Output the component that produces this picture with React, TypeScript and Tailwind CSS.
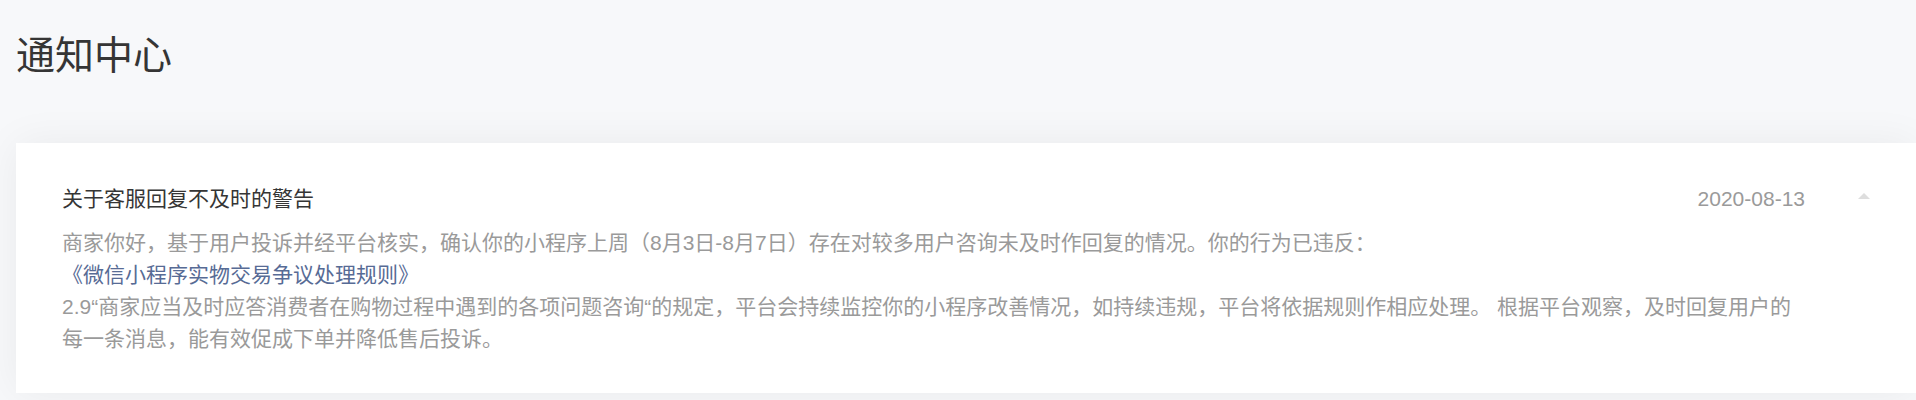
export default function App() {
  const font = {
    fontFamily: '"Liberation Sans", "Noto Sans CJK SC", sans-serif',
  };

  return (
    <div className="min-h-screen bg-[#f7f8fa] pl-4" style={font}>
      <h1 className="pt-[27px] pb-[57px] text-[39px] leading-[1.5] font-normal text-[#353535]">
        通知中心
      </h1>

      <div className="bg-white shadow-[0_0_40px_rgba(0,0,0,0.06)] px-[46px] pt-[40px] pb-[38px]">
        <div className="flex items-center">
          <div className="flex-1 text-[21px] leading-[32px] text-[#353535]">
            关于客服回复不及时的警告
          </div>
          <div className="text-[21px] leading-[32px] text-[#9a9a9a]">2020-08-13</div>
          <div className="ml-[53px] mb-[6px] h-0 w-0 border-x-[6px] border-b-[6px] border-x-transparent border-b-[#dedede]" />
        </div>
        <div className="mt-[12px] pr-[65px] text-[21px] leading-[32px] text-[#9a9a9a]">
          <p>
            商家你好，基于用户投诉并经平台核实，确认你的小程序上周（8月3日-8月7日）存在对较多用户咨询未及时作回复的情况。你的行为已违反：
          </p>
          <a href="#" className="block text-[#576b95]">
            《微信小程序实物交易争议处理规则》
          </a>
          <p>
            2.9“商家应当及时应答消费者在购物过程中遇到的各项问题咨询“的规定，平台会持续监控你的小程序改善情况，如持续违规，平台将依据规则作相应处理。 根据平台观察，及时回复用户的每一条消息，能有效促成下单并降低售后投诉。
          </p>
        </div>
      </div>
    </div>
  );
}
